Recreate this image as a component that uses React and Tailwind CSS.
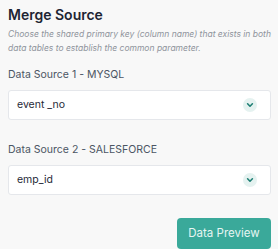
function Chevron() {
    return (
        <span className="flex items-center justify-center w-[14px] h-[14px] rounded-full bg-[#e5f2f0]">
            <svg width="8" height="8" viewBox="0 0 10 10" fill="none">
                <path d="M2 3.5 L5 6.5 L8 3.5" stroke="#1f7f74" strokeWidth="2" strokeLinecap="round" strokeLinejoin="round" />
            </svg>
        </span>
    );
}

function SourceSelect({ label, value }) {
    return (
        <div>
            <div className="text-[10.5px] text-[#4b5563] leading-[14px]">{label}</div>
            <div className="mt-[8px] h-[30px] flex items-center justify-between bg-white border border-[#e5e7eb] rounded-[3px] pl-[8px] pr-[13px]">
                <span className="text-[10.5px] text-[#1f2937]">{value}</span>
                <Chevron />
            </div>
        </div>
    );
}

export default function App() {
    return (
        <div className="w-[278px] h-[249px] bg-[#f8f8f8] pl-[8px] pr-[7px] pt-[6px] overflow-hidden" style={{ fontFamily: 'Inter, "Noto Sans", sans-serif' }}>
            <h3 className="text-[14px] font-semibold text-[#1e2533] leading-[18px]">Merge Source</h3>
            <p className="mt-[3px] text-[8.5px] italic text-[#8f949c] leading-[14px]">
                Choose the shared primary key (column name) that exists in both data tables to establish the common parameter.
            </p>
            <div className="mt-[13px] flex flex-col gap-[23px]">
                <SourceSelect label="Data Source 1 - MYSQL" value="event _no" />
                <SourceSelect label="Data Source 2 - SALESFORCE" value="emp_id" />
            </div>
            <div className="mt-[23px] flex justify-end">
                <button className="w-[94px] h-[31px] rounded-[4px] bg-[#3aa99a] text-[#e6f5f2] text-[11.5px]">Data Preview</button>
            </div>
        </div>
    );
}
